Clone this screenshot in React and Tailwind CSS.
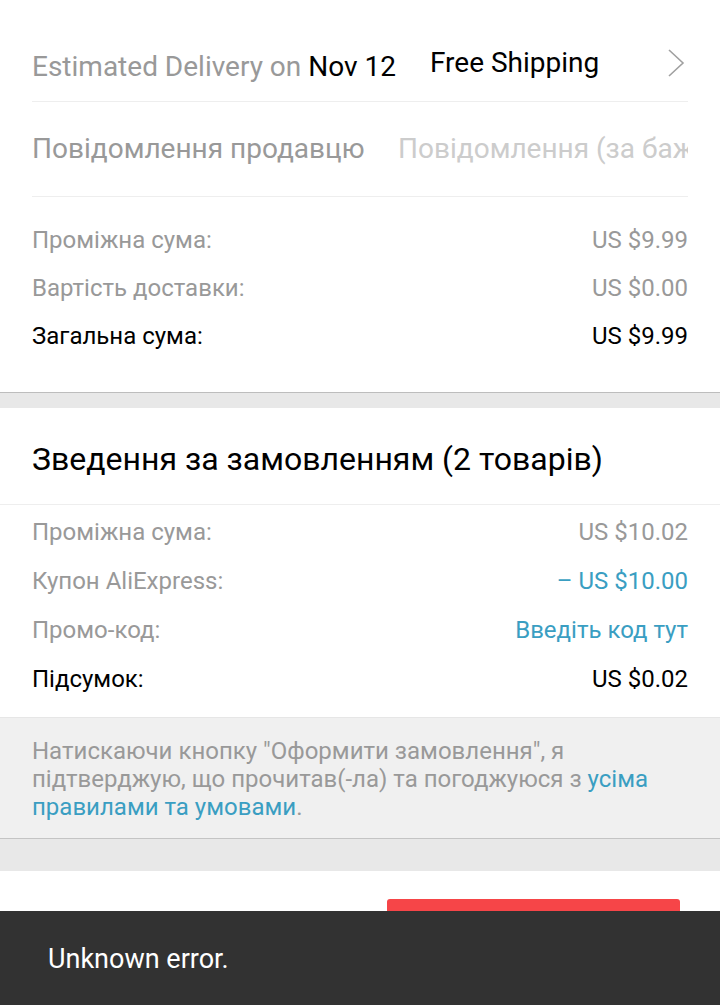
const font = { fontFamily: 'Roboto, "Noto Sans", sans-serif' };

const Row = ({ label, value, strong, valueClass, h = 'h-[48px]' }) => (
    <div className={`flex items-center justify-between ${h}`}>
        <span className={strong ? 'text-black' : 'text-[#999]'}>{label}</span>
        <span className={valueClass || (strong ? 'text-black' : 'text-[#999]')}>{value}</span>
    </div>
);

const App = () => {
    return (
        <div className="relative w-[720px] h-[1005px] overflow-hidden bg-white" style={font}>
            {/* Delivery / message / totals */}
            <div className="bg-white px-8">
                <div className="flex items-center h-[101px] pt-[32px]">
                    <div className="w-[398px] whitespace-nowrap text-[28px]">
                        <span className="text-[#999]">Estimated Delivery on </span>
                        <span className="text-black">Nov 12</span>
                    </div>
                    <div className="flex-1 text-[28px] text-black -mt-2 whitespace-nowrap">Free Shipping</div>
                    <svg width="18" height="30" viewBox="0 0 18 30" className="mr-[3px] -mt-2">
                        <polyline points="2,2 16,15 2,28" fill="none" stroke="#a0a0a0" strokeWidth="1.6" />
                    </svg>
                </div>
                <div className="h-px bg-[#eee]" />
                <div className="flex items-center h-[94px] whitespace-nowrap overflow-hidden text-[28px]">
                    <span className="text-[#999] w-[366px] shrink-0">Повідомлення продавцю</span>
                    <span className="text-[#ccc]">Повідомлення (за бажанням)</span>
                </div>
                <div className="h-px bg-[#eee]" />
                <div className="pt-[19px] pb-[32px] text-[24px]">
                    <Row label="Проміжна сума:" value="US $9.99" />
                    <Row label="Вартість доставки:" value="US $0.00" />
                    <Row label="Загальна сума:" value="US $9.99" strong />
                </div>
            </div>
            <div className="h-[16px] bg-[#e8e8e8] border-t border-[#bdbdbd]" />

            {/* Order summary */}
            <div className="bg-white">
                <div className="h-[96px] flex items-center px-8 pt-[6px] text-[32px] text-black whitespace-nowrap">
                    Зведення за замовленням (2 товарів)
                </div>
                <div className="h-px bg-[#eee]" />
                <div className="px-8 pt-[2px] pb-[14px] text-[24px]">
                    <Row h="h-[49px]" label="Проміжна сума:" value="US $10.02" />
                    <Row h="h-[49px]" label="Купон AliExpress:" value="– US $10.00" valueClass="text-[#3a9ec2]" />
                    <Row h="h-[49px]" label="Промо-код:" value="Введіть код тут" valueClass="text-[#3a9ec2]" />
                    <Row h="h-[49px]" label="Підсумок:" value="US $0.02" strong />
                </div>
                <div className="bg-[#f0f0f0] border-t border-[#e6e6e6] px-8 pt-[19px] pb-[17px] h-[121px] text-[24px] leading-[28px] text-[#999]">
                    <p className="w-[640px]">
                        Натискаючи кнопку "Оформити замовлення", я підтверджую, що прочитав(-ла) та погоджуюся з{' '}
                        <span className="text-[#3a9ec2]">усіма правилами та умовами</span>.
                    </p>
                </div>
            </div>
            <div className="h-[33px] bg-[#e8e8e8] border-t border-[#c4c4c4]" />

            {/* Bottom bar */}
            <div className="bg-white h-[200px] pt-[28px] flex justify-end pr-[40px]">
                <div className="w-[293px] h-[56px] bg-[#f64548] rounded-[3px]" />
            </div>

            {/* Snackbar */}
            <div className="absolute left-0 right-0 bottom-0 h-[94px] bg-[#323232] flex items-center px-12">
                <span className="text-white text-[27px] pt-[2px]">Unknown error.</span>
            </div>
        </div>
    );
};

export default App;
